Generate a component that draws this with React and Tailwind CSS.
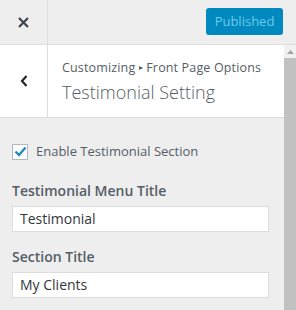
export default function App() {
  return (
    <div className="h-[310px] w-[296px] overflow-hidden bg-[#eeeeee] font-['Open_Sans',sans-serif] text-[#555d66]">
      <div className="flex h-[45px] border-b border-[#dddddd]">
        <div className="flex w-[48px] items-center justify-center border-r border-[#dddddd]">
          <svg width="11" height="11" viewBox="0 0 11 11">
            <path d="M1 1L10 10M10 1L1 10" stroke="#3c434a" strokeWidth="2.2" />
          </svg>
        </div>
        <div className="flex flex-1 items-start justify-end pr-[13px] pt-[8px]">
          <div className="flex h-[27px] w-[77px] items-center justify-center rounded-[3px] bg-[#0089bf] text-[13px] text-[#6ccae8]">
            Published
          </div>
        </div>
      </div>
      <div className="flex">
        <div className="w-[284px]">
          <div className="flex h-[73px] border-b border-[#dddddd] bg-white">
            <div className="flex w-[48px] items-center justify-center border-r border-[#dddddd]">
              <svg width="8" height="12" viewBox="0 0 8 12">
                <path d="M6.5 1L2 6L6.5 11" stroke="#23282d" strokeWidth="2.2" fill="none" />
              </svg>
            </div>
            <div className="pl-[14px] pt-[13px]">
              <div className="text-[12.5px] leading-[17px] tracking-[0.15px] text-[#555d66]">
                Customizing <span className="text-[8px] align-[2px]">▸</span> Front Page Options
              </div>
              <div className="mt-[4px] text-[18px] font-light leading-[24px] text-[#555d66]">
                Testimonial Setting
              </div>
            </div>
          </div>
          <div className="px-[12px] pt-[24px]">
            <label className="flex items-center gap-[8px]">
              <span className="flex h-[16px] w-[16px] items-center justify-center border border-[#b4b9be] bg-white">
                <svg width="13" height="11" viewBox="0 0 13 11">
                  <path d="M1.5 5.5L5 9L11.5 1.5" stroke="#1e8cbe" strokeWidth="2.4" fill="none" />
                </svg>
              </span>
              <span className="text-[13px] text-[#555d66]">Enable Testimonial Section</span>
            </label>
            <div className="mt-[19px] text-[14px] font-semibold leading-[20px] text-[#555d66]">
              Testimonial Menu Title
            </div>
            <div className="mt-[5px] flex h-[26px] w-[257px] items-center border border-[#dddddd] bg-white px-[7px] text-[14px] text-[#32373c]">
              Testimonial
            </div>
            <div className="mt-[15px] text-[14px] font-semibold leading-[20px] text-[#555d66]">
              Section Title
            </div>
            <div className="mt-[5px] flex h-[26px] w-[257px] items-center border border-[#dddddd] bg-white px-[7px] text-[14px] text-[#32373c]">
              My Clients
            </div>
          </div>
        </div>
        <div className="flex h-[265px] w-[12px] flex-col bg-[#f1f1f1]">
          <div className="flex h-[13px] items-center justify-center">
            <svg width="7" height="4" viewBox="0 0 7 4">
              <path d="M0 4L3.5 0L7 4Z" fill="#a3a3a3" />
            </svg>
          </div>
          <div className="flex-1 bg-[#c1c1c1]" />
        </div>
      </div>
    </div>
  );
}
